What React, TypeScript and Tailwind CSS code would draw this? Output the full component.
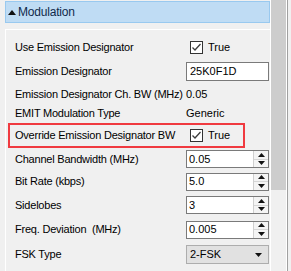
import React from "react";

const font = { fontFamily: '"Liberation Sans", Arial, sans-serif' };

const CheckBox = () => (
  <div className="flex items-center gap-x-[5px]">
    <div className="w-[13px] h-[13px] border border-[#333333] bg-white flex items-center justify-center">
      <svg width="11" height="11" viewBox="0 0 11 11">
        <polyline points="1.5,5.5 4,8 9.5,2" fill="none" stroke="#3c3c3c" strokeWidth="1.3" />
      </svg>
    </div>
    <span className="text-[11px] text-black">True</span>
  </div>
);

const Spin = ({ value }: { value: string }) => (
  <div className="w-[83px] h-[18px] border border-[#7a7a7a] bg-white flex">
    <div className="flex-1 flex items-center pl-[2px] text-[11px] text-black">{value}</div>
    <div className="w-[15px] flex flex-col border-l border-[#cfcfcf] bg-[#f4f4f4]">
      <div className="flex-1 flex items-center justify-center border-b border-[#d6d6d6]">
        <svg width="7" height="4" viewBox="0 0 7 4">
          <polygon points="0,4 7,4 3.5,0" fill="#111" />
        </svg>
      </div>
      <div className="flex-1 flex items-center justify-center">
        <svg width="7" height="4" viewBox="0 0 7 4">
          <polygon points="0,0 7,0 3.5,4" fill="#111" />
        </svg>
      </div>
    </div>
  </div>
);

const Row = ({ label, h, children }: { label: string; h: string; children?: React.ReactNode }) => (
  <div className={`flex items-center ${h}`}>
    <div className="w-[180px] pl-[9px] text-[11px] tracking-[-0.22px] text-black whitespace-pre">{label}</div>
    <div className="flex items-center">{children}</div>
  </div>
);

export default function App() {
  return (
    <div className="w-[291px] h-[271px] bg-[#f0f0f0] flex overflow-hidden" style={font}>
      {/* property grid */}
      <div className="w-[270px] pl-[5px] pt-[1px] flex flex-col">
        <div className="h-[22px] border border-[#99c9ef] bg-[#bfdcf4] flex items-center pl-[2px] gap-x-[2px]">
          <svg width="8" height="5" viewBox="0 0 8 5">
            <polygon points="0,5 8,5 4,0" fill="#111" />
          </svg>
          <span className="text-[12px] tracking-[-0.2px] text-[#102a4c]">Modulation</span>
        </div>
        <div className="mt-[6px] flex-1 border-t border-l border-white flex flex-col pt-[5px]">
          <Row label="Use Emission Designator" h="h-[24px]">
            <div className="pl-[4px]">
              <CheckBox />
            </div>
          </Row>
          <Row label="Emission Designator" h="h-[25px]">
            <div className="w-[83px] h-[19px] border border-[#7a7a7a] bg-white flex items-center pl-[3px] text-[11px] text-black">
              25K0F1D
            </div>
          </Row>
          <Row label="Emission Designator Ch. BW (MHz)" h="h-[20px]">
            <span className="text-[11px] text-black">0.05</span>
          </Row>
          <Row label="EMIT Modulation Type" h="h-[18px]">
            <span className="text-[11px] text-black">Generic</span>
          </Row>
          <div className="h-[26px] flex items-center">
            <div className="ml-[2px] w-[237px] h-[25px] border-2 border-[#f03a40] flex items-center">
              <div className="w-[180px] pl-[5px] text-[11px] tracking-[-0.22px] text-black whitespace-nowrap">
                Override Emission Designator BW
              </div>
              <CheckBox />
            </div>
          </div>
          <Row label="Channel Bandwidth (MHz)" h="h-[22px]">
            <Spin value="0.05" />
          </Row>
          <Row label="Bit Rate (kbps)" h="h-[23px]">
            <Spin value="5.0" />
          </Row>
          <Row label="Sidelobes" h="h-[24px]">
            <Spin value="3" />
          </Row>
          <Row label="Freq. Deviation  (MHz)" h="h-[25px]">
            <Spin value="0.005" />
          </Row>
          <Row label="FSK Type" h="h-[25px]">
            <div className="w-[83px] h-[19px] border border-[#adadad] bg-[#e1e1e1] flex items-center justify-between pl-[3px] pr-[6px] text-[11px] text-black">
              <span>2-FSK</span>
              <svg width="7" height="4" viewBox="0 0 7 4">
                <polygon points="0,0 7,0 3.5,4" fill="#111" />
              </svg>
            </div>
          </Row>
        </div>
      </div>
      {/* scrollbar */}
      <div className="w-[1px] bg-white" />
      <div className="w-[15px] flex flex-col">
        <div className="h-[190px] bg-[#cdcdcd]" />
      </div>
      <div className="w-[1px] bg-white" />
      <div className="w-[1px] bg-[#a0a0a0]" />
    </div>
  );
}
